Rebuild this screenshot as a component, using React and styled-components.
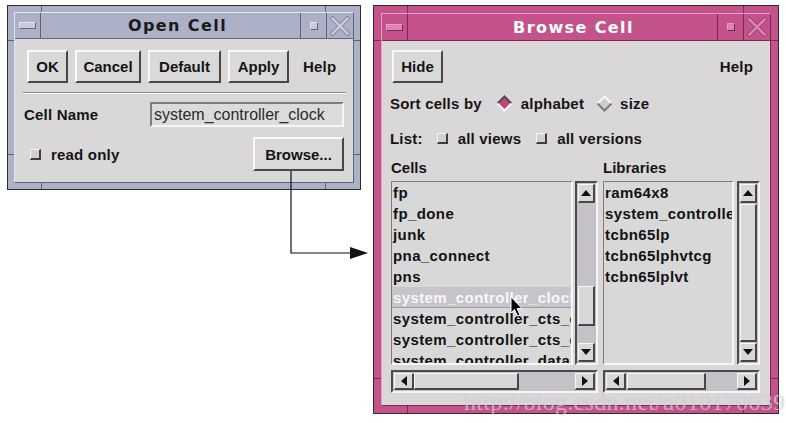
import React from "react";
import styled, { createGlobalStyle } from "styled-components";

const GlobalStyle = createGlobalStyle`
  html, body { margin: 0; padding: 0; background: #fff; }
  body { font-family: "Liberation Sans", Arial, sans-serif; }
`;

// window manager colour schemes: inactive (lavender) and active (pink)
const LAV = { frame: "#adb1c7", light: "#e2e4ee", dark: "#5f637c", title: "#1a1a1a", xOut: "#6e7391", xIn: "#c6cadb" };
const PINK = { frame: "#c3538a", light: "#e79dbf", dark: "#7b2b52", title: "#ffffff", xOut: "#8e3362", xIn: "#d986ae" };

const Page = styled.div`
  position: relative;
  width: 786px;
  height: 423px;
  box-sizing: border-box;
  padding: 5px 0 0 7px;
  display: flex;
  align-items: flex-start;
  gap: 12px;
  overflow: hidden;
`;

const Frame = styled.div`
  position: relative;
  box-sizing: border-box;
  width: ${p => p.$w}px;
  height: ${p => p.$h}px;
  padding: ${p => p.$pad}px;
  background: ${p => p.$c.frame};
  border: 1px solid #2c2c2c;
  display: flex;
`;

const Notch = styled.span`
  position: absolute;
  background: ${p => p.$c.dark};
  ${p => (p.$v ? `width:1px;height:${p.$pad}px;` : `height:1px;width:${p.$pad}px;`)}
  ${p => p.$pos}
`;

const Inner = styled.div`
  flex: 1;
  min-width: 0;
  display: flex;
  flex-direction: column;
  border: 1px solid ${p => p.$c.dark};
  border-top-color: ${p => p.$c.light};
  border-left-color: ${p => p.$c.light};
`;

const TitleBar = styled.div`
  display: flex;
  height: ${p => p.$h}px;
  border-bottom: 1px solid ${p => p.$c.dark};
`;

const MenuCell = styled.div`
  width: ${p => p.$w}px;
  box-sizing: border-box;
  border-right: 1px solid ${p => p.$c.dark};
  display: flex;
  align-items: center;
  justify-content: center;
`;

const MenuBar = styled.span`
  width: 15px;
  height: 5px;
  background: ${p => p.$c.xIn};
  border: 1px solid;
  border-color: ${p => p.$c.light} ${p => p.$c.dark} ${p => p.$c.dark} ${p => p.$c.light};
`;

const Caption = styled.div`
  flex: 1;
  display: flex;
  align-items: center;
  justify-content: center;
  padding-left: ${p => p.$shift}px;
  font-family: "DejaVu Sans", "Liberation Sans", sans-serif;
  font-weight: bold;
  font-size: 16px;
  letter-spacing: 1.4px;
  color: ${p => p.$c.title};
`;

const BoxCell = styled.div`
  width: ${p => p.$w}px;
  box-sizing: border-box;
  border-left: 1px solid ${p => p.$c.dark};
  display: flex;
  align-items: center;
  justify-content: center;
`;

const MinSquare = styled.span`
  width: 6px;
  height: 6px;
  background: ${p => p.$c.xIn};
  border: 1px solid;
  border-color: ${p => p.$c.light} ${p => p.$c.dark} ${p => p.$c.dark} ${p => p.$c.light};
`;

const Body = styled.div`
  flex: 1;
  display: flex;
  flex-direction: column;
  padding: ${p => p.$pad};
  background: #d9d7d7;
  color: #151515;
  font-size: 15px;
  font-weight: bold;
`;

const Row = styled.div`
  display: flex;
  align-items: center;
  justify-content: ${p => p.$justify || "flex-start"};
  gap: ${p => p.$gap || 0}px;
  margin-top: ${p => p.$mt || 0}px;
  padding-left: ${p => p.$pl || 0}px;
  height: ${p => (p.$h ? `${p.$h}px` : "auto")};
`;

const Button = styled.button`
  box-sizing: border-box;
  width: ${p => p.$w}px;
  height: ${p => p.$h || 33}px;
  margin: 0;
  padding: 0;
  background: #dad9d9;
  border: 2px solid;
  border-color: #f8f8f8 #474747 #474747 #f8f8f8;
  font: bold 15px "Liberation Sans", Arial, sans-serif;
  color: #141414;
`;

const Label = styled.span`
  margin-left: ${p => p.$ml || 0}px;
  white-space: nowrap;
  letter-spacing: 0.2px;
`;

const Separator = styled.div`
  margin: 9px -2px 0 -1px;
  border-top: 1px solid #8e8e8e;
  border-bottom: 1px solid #f6f6f6;
`;

const Field = styled.input`
  box-sizing: border-box;
  width: 194px;
  height: 25px;
  margin: 0;
  padding: 0 0 0 2px;
  background: #dcdbdb;
  border: 2px solid;
  border-color: #7d7d7d #f6f6f6 #f6f6f6 #7d7d7d;
  font: 16px "Liberation Sans", Arial, sans-serif;
  color: #2b2b2b;
  outline: none;
`;

const Check = styled.span`
  display: inline-block;
  box-sizing: border-box;
  width: 11px;
  height: 11px;
  margin-left: ${p => p.$ml || 0}px;
  background: #d2d0d0;
  border-style: solid;
  border-width: 1px 2px 2px 1px;
  border-color: #f6f6f6 #3e3e3e #3e3e3e #f6f6f6;
`;

const Columns = styled.div`
  display: grid;
  grid-template-columns: 207px 157px;
  column-gap: 5px;
  margin: 12px 0 0 1px;
`;

const Column = styled.div`
  display: flex;
  flex-direction: column;
`;

const ColLabel = styled.div`
  height: 16px;
  line-height: 16px;
  margin-bottom: 5px;
`;

const ListRow = styled.div`
  display: flex;
  justify-content: space-between;
`;

const ListBox = styled.div`
  box-sizing: border-box;
  width: ${p => p.$w}px;
  height: 184px;
  overflow: hidden;
  background: #d9d8d8;
  border-style: solid;
  border-width: 1px 2px 2px 1px;
  border-color: #7e7e7e #f7f7f7 #f7f7f7 #7e7e7e;
`;

const Item = styled.div`
  box-sizing: border-box;
  height: 21px;
  line-height: 21px;
  padding-left: 1px;
  white-space: nowrap;
  overflow: hidden;
  letter-spacing: 0.4px;
  background: ${p => (p.$sel ? "#c7c4cc" : "transparent")};
  color: ${p => (p.$sel ? "#f7f7f7" : "#121212")};
  border-bottom: ${p => (p.$sel ? "1px solid #9a98a0" : "none")};
`;

const Scroll = styled.div`
  box-sizing: border-box;
  display: flex;
  flex-direction: ${p => (p.$horiz ? "row" : "column")};
  width: ${p => (p.$horiz ? "100%" : "23px")};
  height: ${p => (p.$horiz ? "23px" : "184px")};
  margin-top: ${p => (p.$horiz ? 5 : 0)}px;
  padding: 1px;
  background: #c5c1c9;
  border: 2px solid;
  border-color: #4d4d4d #f4f4f4 #f4f4f4 #4d4d4d;
`;

const Raised = styled.div`
  box-sizing: border-box;
  flex: none;
  display: flex;
  align-items: center;
  justify-content: center;
  background: #d9d8d8;
  border-style: solid;
  border-width: 1px 2px 2px 1px;
  border-color: #f8f8f8 #474747 #474747 #f8f8f8;
  ${p => (p.$horiz ? `width:${p.$len}px;height:100%;` : `height:${p.$len}px;width:100%;`)}
`;

const Track = styled.div`
  flex: ${p => p.$grow} 1 0;
`;

const Overlay = styled.svg`
  position: absolute;
  left: 0;
  top: 0;
  pointer-events: none;
`;

const Watermark = styled.div`
  position: absolute;
  left: 464px;
  top: 389px;
  font: 24px "Liberation Serif", "Times New Roman", serif;
  letter-spacing: 0.3px;
  color: rgba(238, 236, 238, 0.5);
  text-shadow: 0 0 1px rgba(140, 140, 150, 0.4);
  white-space: nowrap;
  pointer-events: none;
`;

const Triangle = ({ dir }) => {
  const pts = {
    up: "0,6 5,0 10,6",
    down: "0,0 10,0 5,6",
    left: "6,0 6,10 0,5",
    right: "0,0 0,10 6,5",
  }[dir];
  const horiz = dir === "left" || dir === "right";
  return (
    <svg width={horiz ? 6 : 10} height={horiz ? 10 : 6}>
      <polygon points={pts} fill="#111" />
    </svg>
  );
};

const ScrollBar = ({ horiz, before, thumb, after }) => (
  <Scroll $horiz={horiz}>
    <Raised $horiz={horiz} $len={horiz ? 20 : 19}>
      <Triangle dir={horiz ? "left" : "up"} />
    </Raised>
    <Track $grow={before} />
    <Raised $horiz={horiz} $len={thumb} />
    <Track $grow={after} />
    <Raised $horiz={horiz} $len={horiz ? 20 : 19}>
      <Triangle dir={horiz ? "right" : "down"} />
    </Raised>
  </Scroll>
);

const CloseX = ({ c }) => (
  <svg width="22" height="22" viewBox="0 0 22 22">
    <polygon
      points="1,3.5 3.5,1 11,8.5 18.5,1 21,3.5 13.5,11 21,18.5 18.5,21 11,13.5 3.5,21 1,18.5 8.5,11"
      fill={c.xIn}
      stroke={c.xOut}
      strokeWidth="1"
    />
  </svg>
);

const Diamond = ({ on }) => (
  <svg width="17" height="17" viewBox="0 0 17 17">
    <polygon points="8.5,1.5 15.5,8.5 8.5,15.5 1.5,8.5" fill={on ? "#c2457b" : "#cfcdcf"} />
    <polyline points="1.5,8.5 8.5,1.5 15.5,8.5" fill="none" stroke={on ? "#4e4e4e" : "#f6f6f6"} strokeWidth="2" />
    <polyline points="1.5,8.5 8.5,15.5 15.5,8.5" fill="none" stroke={on ? "#f8f8f8" : "#7c7c7c"} strokeWidth="2" />
  </svg>
);

const Window = ({ c, w, h, pad, titleH, cells, shift, title, children }) => (
  <Frame $c={c} $w={w} $h={h} $pad={pad}>
    <Notch $c={c} $v $pad={pad} $pos="top:0;left:33px;" />
    <Notch $c={c} $v $pad={pad} $pos="top:0;right:34px;" />
    <Notch $c={c} $v $pad={pad} $pos="bottom:0;left:33px;" />
    <Notch $c={c} $v $pad={pad} $pos="bottom:0;right:34px;" />
    <Notch $c={c} $pad={pad} $pos="left:0;top:34px;" />
    <Notch $c={c} $pad={pad} $pos="right:0;top:34px;" />
    <Notch $c={c} $pad={pad} $pos="left:0;bottom:34px;" />
    <Notch $c={c} $pad={pad} $pos="right:0;bottom:34px;" />
    <Inner $c={c}>
      <TitleBar $c={c} $h={titleH}>
        <MenuCell $c={c} $w={cells[0]}>
          <MenuBar $c={c} />
        </MenuCell>
        <Caption $c={c} $shift={shift}>{title}</Caption>
        <BoxCell $c={c} $w={cells[1]}>
          <MinSquare $c={c} />
        </BoxCell>
        <BoxCell $c={c} $w={cells[2]}>
          <CloseX c={c} />
        </BoxCell>
      </TitleBar>
      {children}
    </Inner>
  </Frame>
);

const cellItems = [
  "fp",
  "fp_done",
  "junk",
  "pna_connect",
  "pns",
  "system_controller_clock",
  "system_controller_cts_clk",
  "system_controller_cts_data",
  "system_controller_data",
];

const libItems = ["ram64x8", "system_controller", "tcbn65lp", "tcbn65lphvtcg", "tcbn65lplvt"];

const OpenCell = () => (
  <Window c={LAV} w={354} h={185} pad={6} titleH={25} cells={[26, 26, 27]} shift={14} title="Open Cell">
    <Body $pad="11px 9px 11px 9px">
      <Row $gap={7} $pl={3}>
        <Button $w={41}>OK</Button>
        <Button $w={66}>Cancel</Button>
        <Button $w={73}>Default</Button>
        <Button $w={61}>Apply</Button>
        <Label $ml={7}>Help</Label>
      </Row>
      <Separator />
      <Row $mt={8} $justify="space-between">
        <Label>Cell Name</Label>
        <Field readOnly value="system_controller_clock" />
      </Row>
      <Row $mt={10} $justify="space-between">
        <Row $gap={10} $pl={6}>
          <Check />
          <Label>read only</Label>
        </Row>
        <Button $w={91} $h={34}>Browse...</Button>
      </Row>
    </Body>
  </Window>
);

const BrowseCell = () => (
  <Window c={PINK} w={406} h={409} pad={7} titleH={26} cells={[26, 26, 27]} shift={22} title="Browse Cell">
    <Body $pad="9px 17px 11px 8px">
      <Row $justify="space-between" $pl={2}>
        <Button $w={51}>Hide</Button>
        <Label>Help</Label>
      </Row>
      <Row $mt={10} $h={20}>
        <Label>Sort cells by</Label>
        <Row $pl={14}>
          <Diamond on />
        </Row>
        <Label $ml={8}>alphabet</Label>
        <Row $pl={12}>
          <Diamond />
        </Row>
        <Label $ml={7}>size</Label>
      </Row>
      <Row $mt={15} $h={20}>
        <Label>List:</Label>
        <Check $ml={14} />
        <Label $ml={10}>all views</Label>
        <Check $ml={15} />
        <Label $ml={10}>all versions</Label>
      </Row>
      <Columns>
        <Column>
          <ColLabel>Cells</ColLabel>
          <ListRow>
            <ListBox $w={182}>
              {cellItems.map((name, i) => (
                <Item key={name} $sel={i === 5}>{name}</Item>
              ))}
            </ListBox>
            <ScrollBar before={83} thumb={40} after={17} />
          </ListRow>
          <ScrollBar horiz before={0} thumb={105} after={56} />
        </Column>
        <Column>
          <ColLabel>Libraries</ColLabel>
          <ListRow>
            <ListBox $w={131}>
              {libItems.map(name => (
                <Item key={name}>{name}</Item>
              ))}
            </ListBox>
            <ScrollBar before={1} thumb={138} after={1} />
          </ListRow>
          <ScrollBar horiz before={1} thumb={79} after={30} />
        </Column>
      </Columns>
    </Body>
  </Window>
);

export default function App() {
  return (
    <>
      <GlobalStyle />
      <Page>
        <OpenCell />
        <BrowseCell />
        {/* connector from the Browse... button into the browser window */}
        <Overlay width="786" height="423">
          <polyline points="291,171 291,253 352,253" fill="none" stroke="#111" strokeWidth="1.2" />
          <polygon points="350,247 368,253 350,259" fill="#111" />
          {/* mouse pointer over the selected cell */}
          <path
            d="M511 297 L511 313 L514.5 309.5 L517.5 316 L520 315 L517 308.5 L522 308.5 Z"
            fill="#000"
            stroke="#fff"
            strokeWidth="1"
          />
        </Overlay>
        <Watermark>http://blog.csdn.net/u010170039</Watermark>
      </Page>
    </>
  );
}
